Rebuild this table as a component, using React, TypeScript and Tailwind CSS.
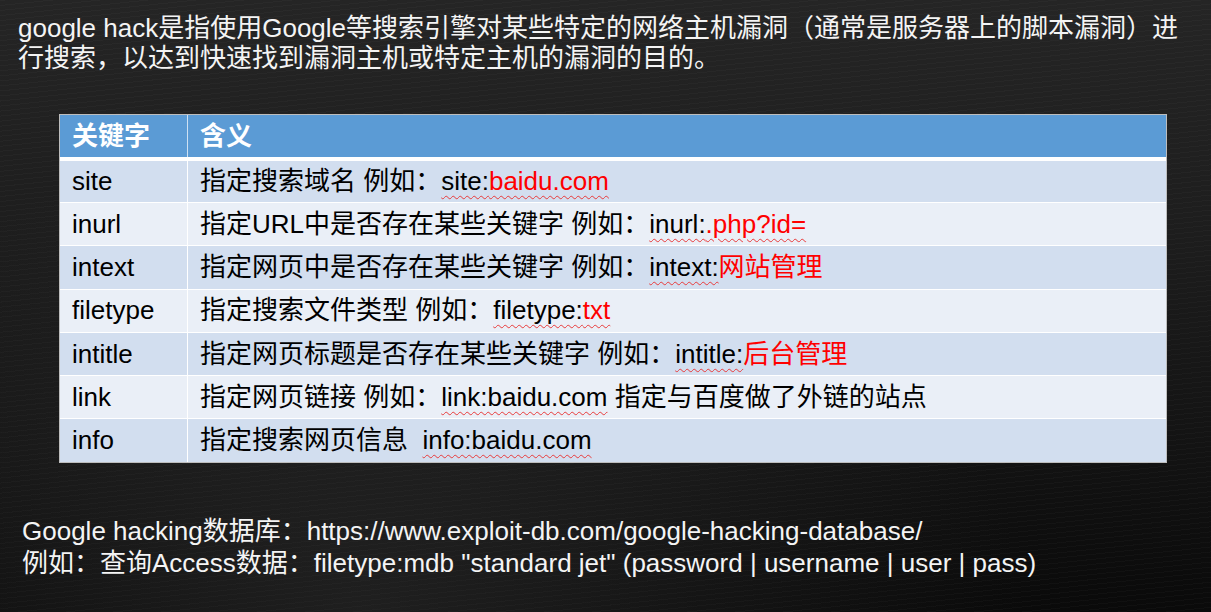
const rows: { key: string; body: React.ReactNode }[] = [
  {
    key: "site",
    body: (
      <>
        指定搜索域名 例如：
        <Squiggle>
          site:<span className="text-[#ff0000]">baidu.com</span>
        </Squiggle>
      </>
    ),
  },
  {
    key: "inurl",
    body: (
      <>
        指定URL中是否存在某些关键字 例如：
        <Squiggle>
          inurl:<span className="text-[#ff0000]">.php?id=</span>
        </Squiggle>
      </>
    ),
  },
  {
    key: "intext",
    body: (
      <>
        指定网页中是否存在某些关键字 例如：<Squiggle>intext:</Squiggle>
        <span className="text-[#ff0000]">网站管理</span>
      </>
    ),
  },
  {
    key: "filetype",
    body: (
      <>
        指定搜索文件类型 例如：
        <Squiggle>
          filetype:<span className="text-[#ff0000]">txt</span>
        </Squiggle>
      </>
    ),
  },
  {
    key: "intitle",
    body: (
      <>
        指定网页标题是否存在某些关键字 例如：<Squiggle>intitle:</Squiggle>
        <span className="text-[#ff0000]">后台管理</span>
      </>
    ),
  },
  {
    key: "link",
    body: (
      <>
        指定网页链接 例如：<Squiggle>link:baidu.com</Squiggle>{" "}指定与百度做了外链的站点
      </>
    ),
  },
  {
    key: "info",
    body: (
      <>
        指定搜索网页信息&nbsp;&nbsp;<Squiggle>info:baidu.com</Squiggle>
      </>
    ),
  },
];

function Squiggle({ children }: { children: React.ReactNode }) {
  return (
    <span className="underline decoration-wavy decoration-[#e83a3a] decoration-1 underline-offset-[5px]">
      {children}
    </span>
  );
}

export default function App() {
  return (
    <div className="relative w-[1211px] h-[612px] overflow-hidden [text-spacing-trim:space-all] font-['Liberation_Sans','Noto_Sans_CJK_SC',sans-serif] bg-[radial-gradient(ellipse_at_30%_100%,rgba(70,70,70,0.35),transparent_55%),repeating-linear-gradient(174deg,rgba(255,255,255,0.025)_0px,rgba(255,255,255,0.025)_1px,transparent_1px,transparent_5px),linear-gradient(180deg,#252525_0%,#1e1e1e_35%,#141414_70%,#0a0a0a_100%)]">
      <div className="pt-[13px] pl-[18px] text-[26px] leading-[30px] text-[#f4f4f4] whitespace-nowrap">
        <div>google hack是指使用Google等搜索引擎对某些特定的网络主机漏洞（通常是服务器上的脚本漏洞）进</div>
        <div>行搜索，以达到快速找到漏洞主机或特定主机的漏洞的目的。</div>
      </div>

      <div className="ml-[59px] mt-[41px] w-[1108px] border border-[#bdbdbd] text-[26px] whitespace-nowrap">
        <div className="flex h-[42px] bg-[#5b9bd5] text-white font-bold">
          <div className="w-[128px] px-3 flex items-center border-r border-white/70">关键字</div>
          <div className="flex-1 px-3 flex items-center">含义</div>
        </div>
        <div className="border-t-4 border-white">
          {rows.map((r, i) => (
            <div
              key={r.key}
              className={`flex text-black ${i === 0 ? "h-[41px]" : "h-[43.3px] border-t-[1.5px] border-white"} ${
                i % 2 === 0 ? "bg-[#d2deef]" : "bg-[#eaeff7]"
              }`}
            >
              <div className="w-[128px] px-3 flex items-center border-r-[1.5px] border-white">{r.key}</div>
              <div className="flex-1 px-3 flex items-center">
                <span>{r.body}</span>
              </div>
            </div>
          ))}
        </div>
      </div>

      <div className="mt-[52px] pl-[22px] text-[26px] leading-[32px] text-[#f4f4f4] whitespace-nowrap">
        <div>Google hacking数据库：https://www.exploit-db.com/google-hacking-database/</div>
        <div>例如：查询Access数据：filetype:mdb "standard jet" (password | username | user | pass)</div>
      </div>
    </div>
  );
}
